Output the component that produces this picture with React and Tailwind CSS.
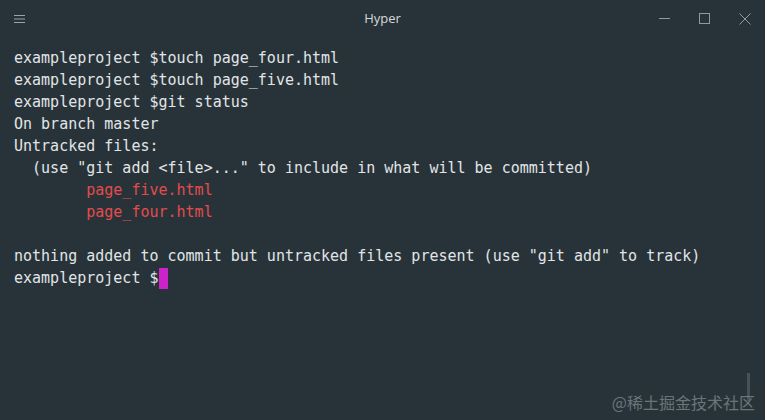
const lines = [
  { text: "exampleproject $touch page_four.html" },
  { text: "exampleproject $touch page_five.html" },
  { text: "exampleproject $git status" },
  { text: "On branch master" },
  { text: "Untracked files:" },
  { text: '  (use "git add <file>..." to include in what will be committed)' },
  { text: "        page_five.html", red: true },
  { text: "        page_four.html", red: true },
  { text: "" },
  { text: 'nothing added to commit but untracked files present (use "git add" to track)' },
];

export default function App() {
  return (
    <div className="relative flex h-[420px] w-[765px] flex-col overflow-hidden bg-[#283339]">
      {/* Title bar */}
      <div className="flex h-[36px] items-center justify-between pt-[1px]">
        <div className="flex w-[120px] items-center pl-[14px]">
          <svg width="11" height="10" viewBox="0 0 11 10" className="text-[#9aa3a8]">
            <path d="M0 1.5h11M0 5h11M0 8.5h11" stroke="currentColor" strokeWidth="1" />
          </svg>
        </div>
        <div className="font-['Open_Sans',sans-serif] text-[13px] text-[#d5d9db]">Hyper</div>
        <div className="flex w-[120px] items-center justify-end">
          <div className="flex h-[36px] w-[40px] items-center justify-center">
            <svg width="11" height="11" viewBox="0 0 11 11" className="text-[#8f999e]">
              <path d="M0 5.5h11" stroke="currentColor" strokeWidth="1" />
            </svg>
          </div>
          <div className="flex h-[36px] w-[40px] items-center justify-center">
            <svg width="11" height="11" viewBox="0 0 11 11" className="text-[#8f999e]">
              <rect x="0.5" y="0.5" width="10" height="10" fill="none" stroke="currentColor" strokeWidth="1" />
            </svg>
          </div>
          <div className="flex h-[36px] w-[40px] items-center justify-center">
            <svg width="12" height="12" viewBox="0 0 12 12" className="text-[#8f999e]">
              <path d="M0.5 0.5l11 11M11.5 0.5l-11 11" stroke="currentColor" strokeWidth="1" />
            </svg>
          </div>
        </div>
      </div>

      {/* Terminal body */}
      <div className="pl-[14px] pt-[11px] font-['DejaVu_Sans_Mono',monospace] text-[15px] leading-[22px] text-[#e1e5e7]">
        {lines.map((line, i) => (
          <div key={i} className={`h-[22px] whitespace-pre ${line.red ? "text-[#e24c4c]" : ""}`}>
            {line.text}
          </div>
        ))}
        <div className="flex h-[22px] items-center whitespace-pre">
          <span>exampleproject $</span>
          <span className="h-[21px] w-[9px] bg-[#cc22cc]" />
        </div>
      </div>

      {/* Scrollbar */}
      <div className="absolute right-[15px] top-[373px] h-[28px] w-[3px] bg-[#46525a]" />

      {/* Watermark */}
      <div className="absolute bottom-[6px] right-[10px] font-['Noto_Sans_CJK_SC',sans-serif] text-[16px] text-[#7c8589] opacity-80">
        @稀土掘金技术社区
      </div>
    </div>
  );
}
